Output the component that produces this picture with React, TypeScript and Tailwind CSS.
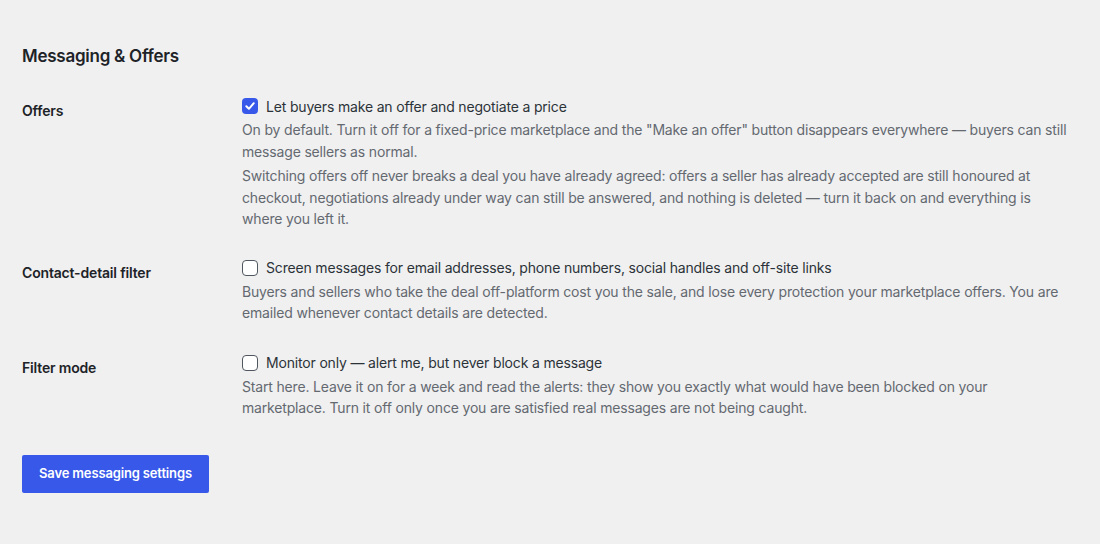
import React from "react";

function Check({ checked }: { checked?: boolean }) {
  return checked ? (
    <span className="w-4 h-4 rounded-[4px] bg-[#3858e9] flex items-center justify-center shrink-0">
      <svg width="12" height="12" viewBox="0 0 12 12" fill="none">
        <path d="M2.3 6.2 L4.9 8.8 L9.8 3.2" stroke="white" strokeWidth="2" strokeLinecap="round" strokeLinejoin="round" />
      </svg>
    </span>
  ) : (
    <span className="w-4 h-4 rounded-[4px] bg-white border border-[#50575e] shrink-0" />
  );
}

function Row({
  label,
  checked,
  option,
  paras,
  className,
}: {
  label: string;
  checked?: boolean;
  option: string;
  paras: string[];
  className?: string;
}) {
  return (
    <div className={"grid grid-cols-[220px_1fr] " + (className || "")}>
      <div className="pt-[5px] text-[14px] leading-[22px] font-semibold tracking-[-0.17px] text-[#1d2327]">{label}</div>
      <div className="pr-[30px]">
        <label className="flex items-center gap-[8px] h-[22px] text-[14px] tracking-[-0.17px] text-[#2c3338]">
          <Check checked={checked} />
          <span>{option}</span>
        </label>
        {paras.map((p, i) => (
          <p
            key={i}
            className={
              "text-[14px] leading-[21.5px] tracking-[-0.17px] text-[#646970] " + (i === 0 ? "mt-[2px]" : "mt-[3px]")
            }
          >
            {p}
          </p>
        ))}
      </div>
    </div>
  );
}

export default function App() {
  return (
    <div
      className="w-[1100px] h-[544px] bg-[#f0f0f1] pl-[22px] pt-[44px]"
      style={{ fontFamily: "Inter, 'Noto Sans', sans-serif" }}
    >
      <h2 className="text-[17px] leading-[24px] font-semibold tracking-[-0.25px] text-[#1d2327]">
        Messaging &amp; Offers
      </h2>
      <Row
        className="mt-[27px]"
        label="Offers"
        checked
        option="Let buyers make an offer and negotiate a price"
        paras={[
          'On by default. Turn it off for a fixed-price marketplace and the "Make an offer" button disappears everywhere — buyers can still message sellers as normal.',
          "Switching offers off never breaks a deal you have already agreed: offers a seller has already accepted are still honoured at checkout, negotiations already under way can still be answered, and nothing is deleted — turn it back on and everything is where you left it.",
        ]}
      />
      <Row
        className="mt-[27px]"
        label="Contact-detail filter"
        option="Screen messages for email addresses, phone numbers, social handles and off-site links"
        paras={[
          "Buyers and sellers who take the deal off-platform cost you the sale, and lose every protection your marketplace offers. You are emailed whenever contact details are detected.",
        ]}
      />
      <Row
        className="mt-[28px]"
        label="Filter mode"
        option="Monitor only — alert me, but never block a message"
        paras={[
          "Start here. Leave it on for a week and read the alerts: they show you exactly what would have been blocked on your marketplace. Turn it off only once you are satisfied real messages are not being caught.",
        ]}
      />
      <button className="mt-[36px] h-[38px] px-[17px] rounded-[2px] bg-[#3858e9] text-white text-[13px] font-semibold tracking-[-0.15px]">
        Save messaging settings
      </button>
    </div>
  );
}
